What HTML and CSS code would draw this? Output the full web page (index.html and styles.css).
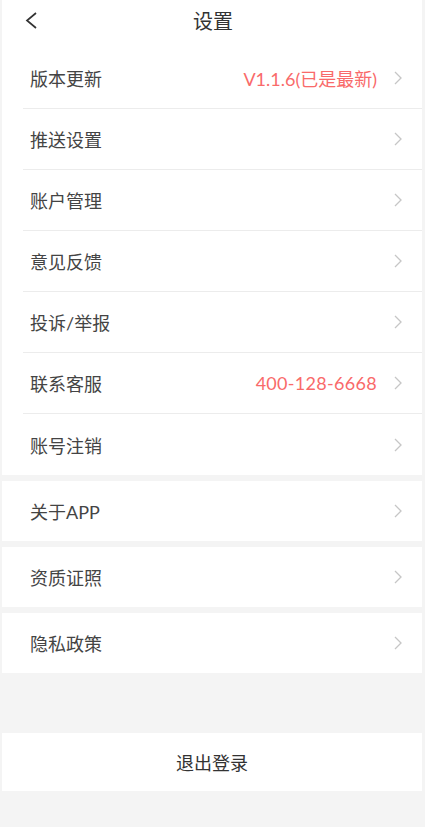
FILE: index.html
```html
<!DOCTYPE html>
<html lang="zh-CN">
<head>
    <meta charset="UTF-8">
    <meta name="viewport" content="width=device-width, initial-scale=1.0">
    <title>设置</title>
    <link rel="stylesheet" href="styles.css">
</head>
<body>
    <div class="page">
        <header class="nav">
            <svg class="back" width="14" height="19" viewBox="0 0 14 19">
                <path d="M12 2 L3 9.5 L12 17" fill="none" stroke="#333" stroke-width="1.7"/>
            </svg>
            <span class="title">设置</span>
        </header>

        <!-- main list -->
        <section class="group">
            <div class="row">
                <span class="label">版本更新</span>
                <span class="value">V1.1.6(已是最新)</span>
                <svg class="arrow" width="10" height="14" viewBox="0 0 10 14"><path d="M2 1 L8 7 L2 13" /></svg>
            </div>
            <div class="row">
                <span class="label">推送设置</span>
                <svg class="arrow" width="10" height="14" viewBox="0 0 10 14"><path d="M2 1 L8 7 L2 13" /></svg>
            </div>
            <div class="row">
                <span class="label">账户管理</span>
                <svg class="arrow" width="10" height="14" viewBox="0 0 10 14"><path d="M2 1 L8 7 L2 13" /></svg>
            </div>
            <div class="row">
                <span class="label">意见反馈</span>
                <svg class="arrow" width="10" height="14" viewBox="0 0 10 14"><path d="M2 1 L8 7 L2 13" /></svg>
            </div>
            <div class="row">
                <span class="label">投诉/举报</span>
                <svg class="arrow" width="10" height="14" viewBox="0 0 10 14"><path d="M2 1 L8 7 L2 13" /></svg>
            </div>
            <div class="row">
                <span class="label">联系客服</span>
                <span class="value phone">400-128-6668</span>
                <svg class="arrow" width="10" height="14" viewBox="0 0 10 14"><path d="M2 1 L8 7 L2 13" /></svg>
            </div>
            <div class="row">
                <span class="label">账号注销</span>
                <svg class="arrow" width="10" height="14" viewBox="0 0 10 14"><path d="M2 1 L8 7 L2 13" /></svg>
            </div>
        </section>

        <section class="group single">
            <div class="row">
                <span class="label">关于APP</span>
                <svg class="arrow" width="10" height="14" viewBox="0 0 10 14"><path d="M2 1 L8 7 L2 13" /></svg>
            </div>
        </section>
        <section class="group single">
            <div class="row">
                <span class="label">资质证照</span>
                <svg class="arrow" width="10" height="14" viewBox="0 0 10 14"><path d="M2 1 L8 7 L2 13" /></svg>
            </div>
        </section>
        <section class="group single">
            <div class="row">
                <span class="label">隐私政策</span>
                <svg class="arrow" width="10" height="14" viewBox="0 0 10 14"><path d="M2 1 L8 7 L2 13" /></svg>
            </div>
        </section>

        <button class="logout">退出登录</button>
    </div>
</body>
</html>
```

FILE: styles.css
```css
body {
    margin: 0;
    padding: 0;
    background: #f4f4f4;
    font-family: Lato, "Noto Sans CJK SC", sans-serif;
    color: #333;
}

.page {
    margin: 0 3px 0 2px;
    min-height: 827px;
    background: #f4f4f4;
}

.nav {
    height: 48px;
    background: #fff;
    display: flex;
    align-items: center;
    justify-content: center;
    position: relative;
}

.back {
    position: absolute;
    left: 22px;
    top: 11px;
}

.title {
    font-size: 20px;
    color: #333;
    margin-top: -7px;
    padding-left: 2px;
}

.group {
    background: #fff;
}

.group.single {
    margin-top: 6px;
}

.row {
    height: 61px;
    margin-left: 21px;
    padding-right: 19px;
    display: flex;
    align-items: center;
    border-bottom: 1px solid #ececec;
    box-sizing: border-box;
}

.row:last-child {
    border-bottom: none;
}

.single .row {
    height: 60px;
}

.label {
    flex: 1;
    font-size: 18px;
    color: #444;
    padding-left: 7px;
}

.value {
    font-size: 18px;
    color: #f96a6a;
    margin-right: 16px;
}

.value.phone {
    letter-spacing: 0.3px;
}

.arrow path {
    fill: none;
    stroke: #c6c6c6;
    stroke-width: 1.3;
}

.logout {
    display: block;
    width: 100%;
    height: 58px;
    margin-top: 60px;
    border: none;
    background: #fff;
    font-family: inherit;
    font-size: 18px;
    color: #333;
    padding: 0;
}
```
